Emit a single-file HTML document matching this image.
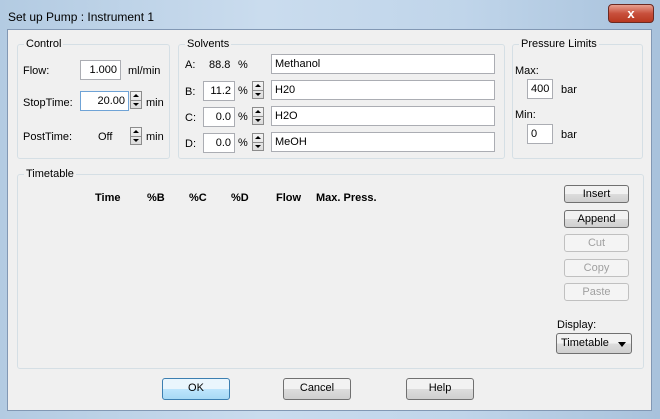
<!DOCTYPE html>
<html><head><style>
*{margin:0;padding:0;box-sizing:border-box}
body{width:660px;height:419px;overflow:hidden;font-family:"Liberation Sans",sans-serif;font-size:11px;color:#000;background:linear-gradient(90deg,#b3cbe2,#cadcee 40%,#c0d5ea 70%,#a8c2dc);position:relative}
.a{position:absolute}
.client{left:7px;top:29px;width:645px;height:382px;background:#f0f0f0;border:1px solid #8298b4}
.grp{position:absolute;border:1px solid #d5dfe5;border-radius:3px}
.lg{position:absolute;top:-7px;left:6px;background:#f0f0f0;padding:0 2px;font-size:11px}
.in{position:absolute;background:#fff;border:1px solid #abadb3;height:20px;line-height:18px;padding:0 3px;font-size:11px}
.r{text-align:right}
.sp{position:absolute;width:12px;height:18px;border:1px solid #8c8c8c;background:linear-gradient(#f4f4f4,#dcdcdc)}
.sp:before{content:"";position:absolute;left:2px;top:2px;border:3px solid transparent;border-bottom:3px solid #000;border-top:0}
.sp:after{content:"";position:absolute;left:2px;bottom:2px;border:3px solid transparent;border-top:3px solid #000;border-bottom:0}
.sp i{position:absolute;left:0;right:0;top:8px;border-top:1px solid #8c8c8c}
.btn{position:absolute;border:1px solid #707070;border-radius:3px;background:linear-gradient(#f2f2f2 50%,#dddddd 50%,#cfcfcf);text-align:center;font-size:11px;line-height:19px}
.dis{border-color:#c0c0c0;background:#f4f4f4;color:#a0a0a0}
.b{font-weight:bold}
</style></head><body>
<div class="a" style="left:8px;top:10px;font-size:12px">Set up Pump : Instrument 1</div>
<div class="a" style="left:608px;top:4px;width:46px;height:19px;border:1px solid #6b2a22;border-radius:4px;background:linear-gradient(#e8a090,#c8503c 50%,#b83820);color:#fff;font-weight:bold;text-align:center;line-height:17px;font-size:13px">x</div>
<div class="a client"></div>

<div class="grp" style="left:17px;top:44px;width:153px;height:115px"><span class="lg">Control</span></div>
<div class="a" style="left:23px;top:65px">Flow:</div>
<div class="in r" style="left:80px;top:60px;width:41px">1.000</div>
<div class="a" style="left:128px;top:65px">ml/min</div>
<div class="a" style="left:23px;top:97px">StopTime:</div>
<div class="in r" style="left:80px;top:91px;width:49px;border-color:#6fa3d6">20.00</div>
<div class="sp" style="left:130px;top:91px"><i></i></div>
<div class="a" style="left:146px;top:97px">min</div>
<div class="a" style="left:23px;top:131px">PostTime:</div>
<div class="a" style="left:98px;top:131px">Off</div>
<div class="sp" style="left:130px;top:127px"><i></i></div>
<div class="a" style="left:146px;top:131px">min</div>

<div class="grp" style="left:178px;top:44px;width:327px;height:115px"><span class="lg">Solvents</span></div>
<div class="a" style="left:185px;top:59px">A:</div><div class="a" style="left:209px;top:59px">88.8</div><div class="a" style="left:238px;top:59px">%</div>
<div class="in" style="left:271px;top:54px;width:224px">Methanol</div>
<div class="a" style="left:185px;top:86px">B:</div><div class="in r" style="left:203px;top:81px;width:32px">11.2</div><div class="a" style="left:238px;top:85px">%</div><div class="sp" style="left:252px;top:81px"><i></i></div>
<div class="in" style="left:271px;top:80px;width:224px">H20</div>
<div class="a" style="left:185px;top:112px">C:</div><div class="in r" style="left:203px;top:107px;width:32px">0.0</div><div class="a" style="left:238px;top:111px">%</div><div class="sp" style="left:252px;top:107px"><i></i></div>
<div class="in" style="left:271px;top:106px;width:224px">H2O</div>
<div class="a" style="left:185px;top:138px">D:</div><div class="in r" style="left:203px;top:133px;width:32px">0.0</div><div class="a" style="left:238px;top:137px">%</div><div class="sp" style="left:252px;top:133px"><i></i></div>
<div class="in" style="left:271px;top:132px;width:224px">MeOH</div>

<div class="grp" style="left:512px;top:44px;width:131px;height:115px"><span class="lg">Pressure Limits</span></div>
<div class="a" style="left:515px;top:65px">Max:</div>
<div class="in" style="left:527px;top:79px;width:26px">400</div><div class="a" style="left:561px;top:84px">bar</div>
<div class="a" style="left:515px;top:109px">Min:</div>
<div class="in" style="left:527px;top:124px;width:26px">0</div><div class="a" style="left:561px;top:129px">bar</div>

<div class="grp" style="left:17px;top:174px;width:627px;height:195px"><span class="lg">Timetable</span></div>
<div class="a b" style="left:95px;top:192px">Time</div>
<div class="a b" style="left:147px;top:192px">%B</div>
<div class="a b" style="left:189px;top:192px">%C</div>
<div class="a b" style="left:231px;top:192px">%D</div>
<div class="a b" style="left:276px;top:192px">Flow</div>
<div class="a b" style="left:316px;top:192px">Max. Press.</div>
<div class="btn" style="left:564px;top:185px;width:65px;height:18px;line-height:16px">Insert</div>
<div class="btn" style="left:564px;top:210px;width:65px;height:18px;line-height:16px">Append</div>
<div class="btn dis" style="left:564px;top:234px;width:65px;height:18px;line-height:16px">Cut</div>
<div class="btn dis" style="left:564px;top:259px;width:65px;height:18px;line-height:16px">Copy</div>
<div class="btn dis" style="left:564px;top:283px;width:65px;height:18px;line-height:16px">Paste</div>
<div class="a" style="left:557px;top:319px">Display:</div>
<div class="btn" style="left:556px;top:333px;width:76px;height:21px;text-align:left;padding-left:4px">Timetable<span style="position:absolute;right:5px;top:8px;border:4px solid transparent;border-top:5px solid #000;border-bottom:0"></span></div>

<div class="btn" style="left:162px;top:378px;width:68px;height:22px;border-color:#3c7fb1;background:linear-gradient(#eaf6fd 50%,#bee6fd 50%,#a7d9f5)">OK</div>
<div class="btn" style="left:283px;top:378px;width:68px;height:22px">Cancel</div>
<div class="btn" style="left:406px;top:378px;width:68px;height:22px">Help</div>
</body></html>
